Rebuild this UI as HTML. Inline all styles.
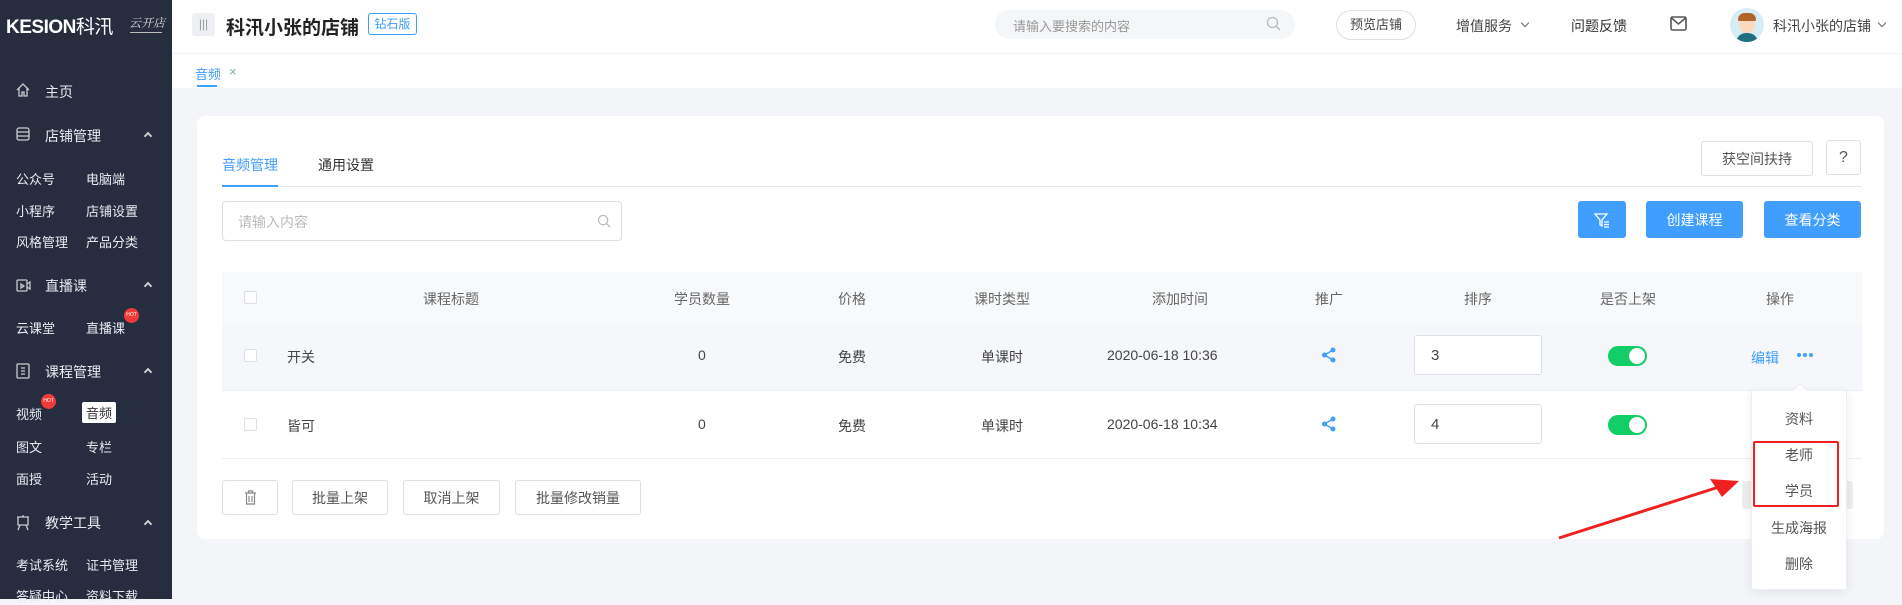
<!DOCTYPE html>
<html><head><meta charset="utf-8"><style>
*{margin:0;padding:0;box-sizing:border-box}
body{width:1902px;height:599px;overflow:hidden;background:#f3f5f8;font-family:"Liberation Sans","Noto Sans CJK SC",sans-serif;color:#333;position:relative}
.a{position:absolute;white-space:nowrap}
.sb{position:absolute;left:0;top:0;width:172px;height:599px;background:#252d3f;color:#e8eaee}
.sb .a{font-size:14px}
.sb .s{font-size:13px}
.hd{position:absolute;left:172px;top:0;width:1730px;height:53px;background:#fff}
.tb{position:absolute;left:172px;top:53px;width:1730px;height:35px;background:#fff;border-top:1px solid #f2f4f7}
.card{position:absolute;left:197px;top:116px;width:1687px;height:423px;background:#fff;border-radius:8px}
.btn{position:absolute;border:1px solid #dcdfe6;border-radius:3px;background:#fff;font-size:14px;color:#555;display:flex;align-items:center;justify-content:center}
.bb{position:absolute;background:#409eff;border-radius:3px;color:#fff;font-size:14px;display:flex;align-items:center;justify-content:center}
.th{font-size:14px;color:#666}
.td{font-size:14px;color:#444}
.cb{position:absolute;width:13px;height:13px;border:1px solid #dcdfe6;border-radius:2px;background:#fff}
.tg{position:absolute;width:39px;height:20px;border-radius:10px;background:#13ce66}
.tg:after{content:"";position:absolute;right:2px;top:2px;width:16px;height:16px;border-radius:50%;background:#fff}
.inp{position:absolute;width:128px;height:40px;border:1px solid #dcdfe6;border-radius:3px;background:#fff;font-size:15px;padding:11px 0 0 16px;color:#444}
.car{position:absolute;width:6px;height:6px;border-left:2px solid #ccc;border-top:2px solid #ccc;transform:rotate(45deg)}
</style></head><body>
<div class="sb">
<div class="a" style="left:6px;top:12px;font-size:19px;font-weight:bold;letter-spacing:-0.5px;color:#fff">KESION<span style="font-weight:normal">科汛</span></div>
<div class="a" style="left:129px;top:14px;font-size:12px;font-style:italic;color:#ddd;font-family:'Liberation Serif','Noto Serif CJK SC',serif">云开店</div>
<div style="position:absolute;left:130px;top:32px;width:32px;height:1px;background:#bbb"></div>
<svg class="a" style="left:15px;top:82px" width="16" height="16" viewBox="0 0 16 16" fill="none" stroke="#ccc" stroke-width="1.3"><path d="M2 8L8 2l6 6M4 6v8h3v-4h2v4h3V6"/></svg>
<div class="a" style="left:45px;top:82px">主页</div>
<svg class="a" style="left:15px;top:126px" width="16" height="16" viewBox="0 0 16 16" fill="none" stroke="#ccc" stroke-width="1.3"><rect x="2" y="2" width="12" height="12" rx="2"/><path d="M2 6h12M2 10h12"/></svg>
<div class="a" style="left:45px;top:126px">店铺管理</div><div class="car" style="left:145px;top:133px"></div>
<div class="a s" style="left:16px;top:169px">公众号</div><div class="a s" style="left:86px;top:169px">电脑端</div>
<div class="a s" style="left:16px;top:201px">小程序</div><div class="a s" style="left:86px;top:201px">店铺设置</div>
<div class="a s" style="left:16px;top:232px">风格管理</div><div class="a s" style="left:86px;top:232px">产品分类</div>
<svg class="a" style="left:15px;top:276px" width="16" height="17" viewBox="0 0 16 17" fill="none" stroke="#ccc" stroke-width="1.3"><rect x="2" y="4" width="10" height="11" rx="1"/><path d="M12 8l3-2v7l-3-2M6 8l3 2-3 2z"/></svg>
<div class="a" style="left:45px;top:276px">直播课</div><div class="car" style="left:145px;top:283px"></div>
<div class="a s" style="left:16px;top:318px">云课堂</div><div class="a s" style="left:86px;top:318px">直播课</div>
<div class="a" style="left:124px;top:308px;width:15px;height:15px;border-radius:50% 50% 50% 50%;background:#f03a3a;font-size:5px;color:#fff;text-align:center;line-height:15px">HOT</div>
<svg class="a" style="left:15px;top:362px" width="16" height="17" viewBox="0 0 16 17" fill="none" stroke="#ccc" stroke-width="1.3"><rect x="2" y="2" width="12" height="14" rx="1"/><path d="M6 6h4M6 9h4M6 12h4"/></svg>
<div class="a" style="left:45px;top:362px">课程管理</div><div class="car" style="left:145px;top:369px"></div>
<div class="a s" style="left:16px;top:404px">视频</div>
<div class="a" style="left:41px;top:394px;width:15px;height:15px;border-radius:50%;background:#f03a3a;font-size:5px;color:#fff;text-align:center;line-height:15px">HOT</div>
<div class="a s" style="left:82px;top:402px;background:#fff;color:#333;padding:1px 4px;border-radius:2px">音频</div>
<div class="a s" style="left:16px;top:437px">图文</div><div class="a s" style="left:86px;top:437px">专栏</div>
<div class="a s" style="left:16px;top:469px">面授</div><div class="a s" style="left:86px;top:469px">活动</div>
<svg class="a" style="left:15px;top:514px" width="16" height="17" viewBox="0 0 16 17" fill="none" stroke="#ccc" stroke-width="1.3"><path d="M2 3h12M3 3v8h10V3M5 11l-2 5M11 11l2 5M8 1v2"/></svg>
<div class="a" style="left:45px;top:513px">教学工具</div><div class="car" style="left:145px;top:521px"></div>
<div class="a s" style="left:16px;top:555px">考试系统</div><div class="a s" style="left:86px;top:555px">证书管理</div>
<div class="a s" style="left:16px;top:586px">答疑中心</div><div class="a s" style="left:86px;top:586px">资料下载</div>
</div>
<div class="hd"></div>
<div class="a" style="left:192px;top:13px;width:23px;height:23px;background:#eef0f4;border-radius:3px;color:#999;font-size:12px;text-align:center;line-height:23px">|||</div>
<div class="a" style="left:226px;top:13px;font-size:19px;font-weight:bold;color:#222">科汛小张的店铺</div>
<div class="a" style="left:368px;top:13px;width:49px;height:22px;border:1px solid #409eff;border-radius:3px;color:#409eff;font-size:12px;text-align:center;line-height:20px">钻石版</div>
<div class="a" style="left:995px;top:10px;width:300px;height:29px;background:#f5f6f8;border-radius:15px;font-size:13px;color:#999;padding:6px 0 0 18px">请输入要搜索的内容</div>
<svg class="a" style="left:1266px;top:16px" width="15" height="15" viewBox="0 0 15 15" fill="none" stroke="#bbb" stroke-width="1.3"><circle cx="6.5" cy="6.5" r="5"/><path d="M10 10l4 4"/></svg>
<div class="a" style="left:1336px;top:10px;width:80px;height:30px;border:1px solid #dcdfe6;border-radius:15px;font-size:13px;color:#444;text-align:center;line-height:28px">预览店铺</div>
<div class="a" style="left:1456px;top:16px;font-size:14px;color:#444">增值服务</div>
<div class="a" style="left:1522px;top:20px;width:6px;height:6px;border-right:1.5px solid #666;border-bottom:1.5px solid #666;transform:rotate(45deg)"></div>
<div class="a" style="left:1571px;top:16px;font-size:14px;color:#333">问题反馈</div>
<svg class="a" style="left:1670px;top:16px" width="17" height="15" viewBox="0 0 17 15" fill="none" stroke="#555" stroke-width="1.6"><rect x="1" y="1" width="15" height="13" rx="1.5"/><path d="M1.5 2l7 6 7-6"/></svg>
<div class="a" style="left:1730px;top:8px;width:34px;height:34px;border-radius:50%;background:#d7edf6;overflow:hidden">
<div style="position:absolute;left:9px;top:7px;width:16px;height:18px;border-radius:50%;background:#fbd9bf"></div>
<div style="position:absolute;left:8px;top:5px;width:18px;height:8px;border-radius:9px 9px 2px 2px;background:#b0642a"></div>
<div style="position:absolute;left:6px;top:25px;width:22px;height:12px;border-radius:10px 10px 0 0;background:#1f6f80"></div></div>
<div class="a" style="left:1773px;top:16px;font-size:14px;color:#444">科汛小张的店铺</div>
<div class="a" style="left:1879px;top:20px;width:6px;height:6px;border-right:1.5px solid #666;border-bottom:1.5px solid #666;transform:rotate(45deg)"></div>
<div class="tb"></div>
<div class="a" style="left:195px;top:64px;font-size:13px;color:#409eff">音频</div>
<div class="a" style="left:229px;top:64px;font-size:13px;color:#8aa">×</div>
<div class="a" style="left:197px;top:85px;width:20px;height:2px;background:#409eff"></div>
<div class="card"></div>
<div class="a" style="left:222px;top:155px;font-size:14px;color:#409eff">音频管理</div>
<div class="a" style="left:318px;top:155px;font-size:14px;color:#333">通用设置</div>
<div class="a" style="left:222px;top:186px;width:1640px;height:1px;background:#e4e7ed"></div>
<div class="a" style="left:222px;top:185px;width:56px;height:2px;background:#409eff"></div>
<div class="btn" style="left:1701px;top:141px;width:112px;height:35px">获空间扶持</div>
<div class="btn" style="left:1826px;top:140px;width:35px;height:35px;font-size:16px">?</div>
<div class="a" style="left:222px;top:201px;width:400px;height:40px;border:1px solid #dcdfe6;border-radius:4px;font-size:14px;color:#bbb;padding:10px 0 0 15px">请输入内容</div>
<svg class="a" style="left:597px;top:214px" width="14" height="14" viewBox="0 0 15 15" fill="none" stroke="#bbb" stroke-width="1.3"><circle cx="6.5" cy="6.5" r="5"/><path d="M10 10l4 4"/></svg>
<div class="bb" style="left:1578px;top:201px;width:48px;height:37px"><svg width="16" height="16" viewBox="0 0 16 16" fill="none" stroke="#fff" stroke-width="1.3"><path d="M1 2h12L8 8v6l-2-1V8z M10 10h5M10 12.5h5M10 15h5"/></svg></div>
<div class="bb" style="left:1646px;top:201px;width:97px;height:37px">创建课程</div>
<div class="bb" style="left:1764px;top:201px;width:97px;height:37px">查看分类</div>
<div class="a" style="left:222px;top:272px;width:1640px;height:51px;background:#f8f9fb"></div>
<div class="a" style="left:222px;top:323px;width:1640px;height:68px;background:#f5f7fa;border-bottom:1px solid #ebeef5"></div>
<div class="a" style="left:222px;top:391px;width:1640px;height:68px;border-bottom:1px solid #ebeef5"></div>
<div class="cb" style="left:244px;top:291px"></div><div class="cb" style="left:244px;top:349px"></div><div class="cb" style="left:244px;top:418px"></div>
<div class="a th" style="left:423px;top:289px">课程标题</div>
<div class="a th" style="left:674px;top:289px">学员数量</div>
<div class="a th" style="left:838px;top:289px">价格</div>
<div class="a th" style="left:974px;top:289px">课时类型</div>
<div class="a th" style="left:1152px;top:289px">添加时间</div>
<div class="a th" style="left:1315px;top:289px">推广</div>
<div class="a th" style="left:1464px;top:289px">排序</div>
<div class="a th" style="left:1600px;top:289px">是否上架</div>
<div class="a th" style="left:1766px;top:289px">操作</div>
<div class="a td" style="left:287px;top:347px">开关</div>
<div class="a td" style="left:698px;top:347px">0</div>
<div class="a td" style="left:838px;top:347px">免费</div>
<div class="a td" style="left:981px;top:347px">单课时</div>
<div class="a td" style="left:1107px;top:347px">2020-06-18 10:36</div>
<div class="a td" style="left:287px;top:416px">皆可</div>
<div class="a td" style="left:698px;top:416px">0</div>
<div class="a td" style="left:838px;top:416px">免费</div>
<div class="a td" style="left:981px;top:416px">单课时</div>
<div class="a td" style="left:1107px;top:416px">2020-06-18 10:34</div>
<svg class="a" style="left:1321px;top:347px" width="16" height="16" viewBox="0 0 16 16"><g fill="#409eff"><circle cx="12" cy="3" r="2.5"/><circle cx="3.5" cy="8" r="2.5"/><circle cx="12" cy="13" r="2.5"/></g><path d="M12 3L3.5 8 12 13" stroke="#409eff" stroke-width="1.5" fill="none"/></svg>
<svg class="a" style="left:1321px;top:416px" width="16" height="16" viewBox="0 0 16 16"><g fill="#409eff"><circle cx="12" cy="3" r="2.5"/><circle cx="3.5" cy="8" r="2.5"/><circle cx="12" cy="13" r="2.5"/></g><path d="M12 3L3.5 8 12 13" stroke="#409eff" stroke-width="1.5" fill="none"/></svg>
<div class="inp" style="left:1414px;top:335px">3</div>
<div class="inp" style="left:1414px;top:404px">4</div>
<div class="tg" style="left:1608px;top:346px"></div>
<div class="tg" style="left:1608px;top:415px"></div>
<div class="a" style="left:1751px;top:348px;font-size:14px;color:#409eff">编辑</div>
<div class="a" style="left:1797px;top:353px;font-size:0">
<span style="display:inline-block;width:4px;height:4px;border-radius:50%;background:#409eff;margin-right:2px"></span><span style="display:inline-block;width:4px;height:4px;border-radius:50%;background:#409eff;margin-right:2px"></span><span style="display:inline-block;width:4px;height:4px;border-radius:50%;background:#409eff"></span></div>
<div class="btn" style="left:222px;top:480px;width:56px;height:35px"><svg width="13" height="15" viewBox="0 0 13 15" fill="none" stroke="#888" stroke-width="1.2"><path d="M1 3h11M4.5 3V1h4v2M2.5 3v11h8V3M5 6v6M8 6v6"/></svg></div>
<div class="btn" style="left:292px;top:480px;width:96px;height:35px">批量上架</div>
<div class="btn" style="left:403px;top:480px;width:97px;height:35px">取消上架</div>
<div class="btn" style="left:515px;top:480px;width:126px;height:35px">批量修改销量</div>
<div class="a" style="left:1742px;top:481px;width:111px;height:28px;background:#eeeeee;border-radius:3px"></div>
<div class="a" style="left:1751px;top:390px;width:96px;height:200px;background:#fff;border:1px solid #ebeef5;border-radius:3px;box-shadow:0 2px 10px rgba(0,0,0,0.08)"></div>
<div class="a" style="left:1795px;top:385px;width:10px;height:10px;background:#fff;transform:rotate(45deg);border-left:1px solid #ebeef5;border-top:1px solid #ebeef5"></div>
<div class="a" style="left:1785px;top:409px;font-size:14px;color:#555">资料</div>
<div class="a" style="left:1785px;top:445px;font-size:14px;color:#555">老师</div>
<div class="a" style="left:1785px;top:481px;font-size:14px;color:#555">学员</div>
<div class="a" style="left:1771px;top:518px;font-size:14px;color:#555">生成海报</div>
<div class="a" style="left:1785px;top:554px;font-size:14px;color:#555">删除</div>
<div class="a" style="left:1753px;top:441px;width:86px;height:66px;border:2px solid #f02020;border-radius:2px"></div>
<svg class="a" style="left:1550px;top:470px" width="200" height="75" viewBox="0 0 200 75"><path d="M9 68L172 16" stroke="#f02020" stroke-width="3"/><path d="M189 11L160 9L172 27z" fill="#f02020"/></svg>
</body></html>
